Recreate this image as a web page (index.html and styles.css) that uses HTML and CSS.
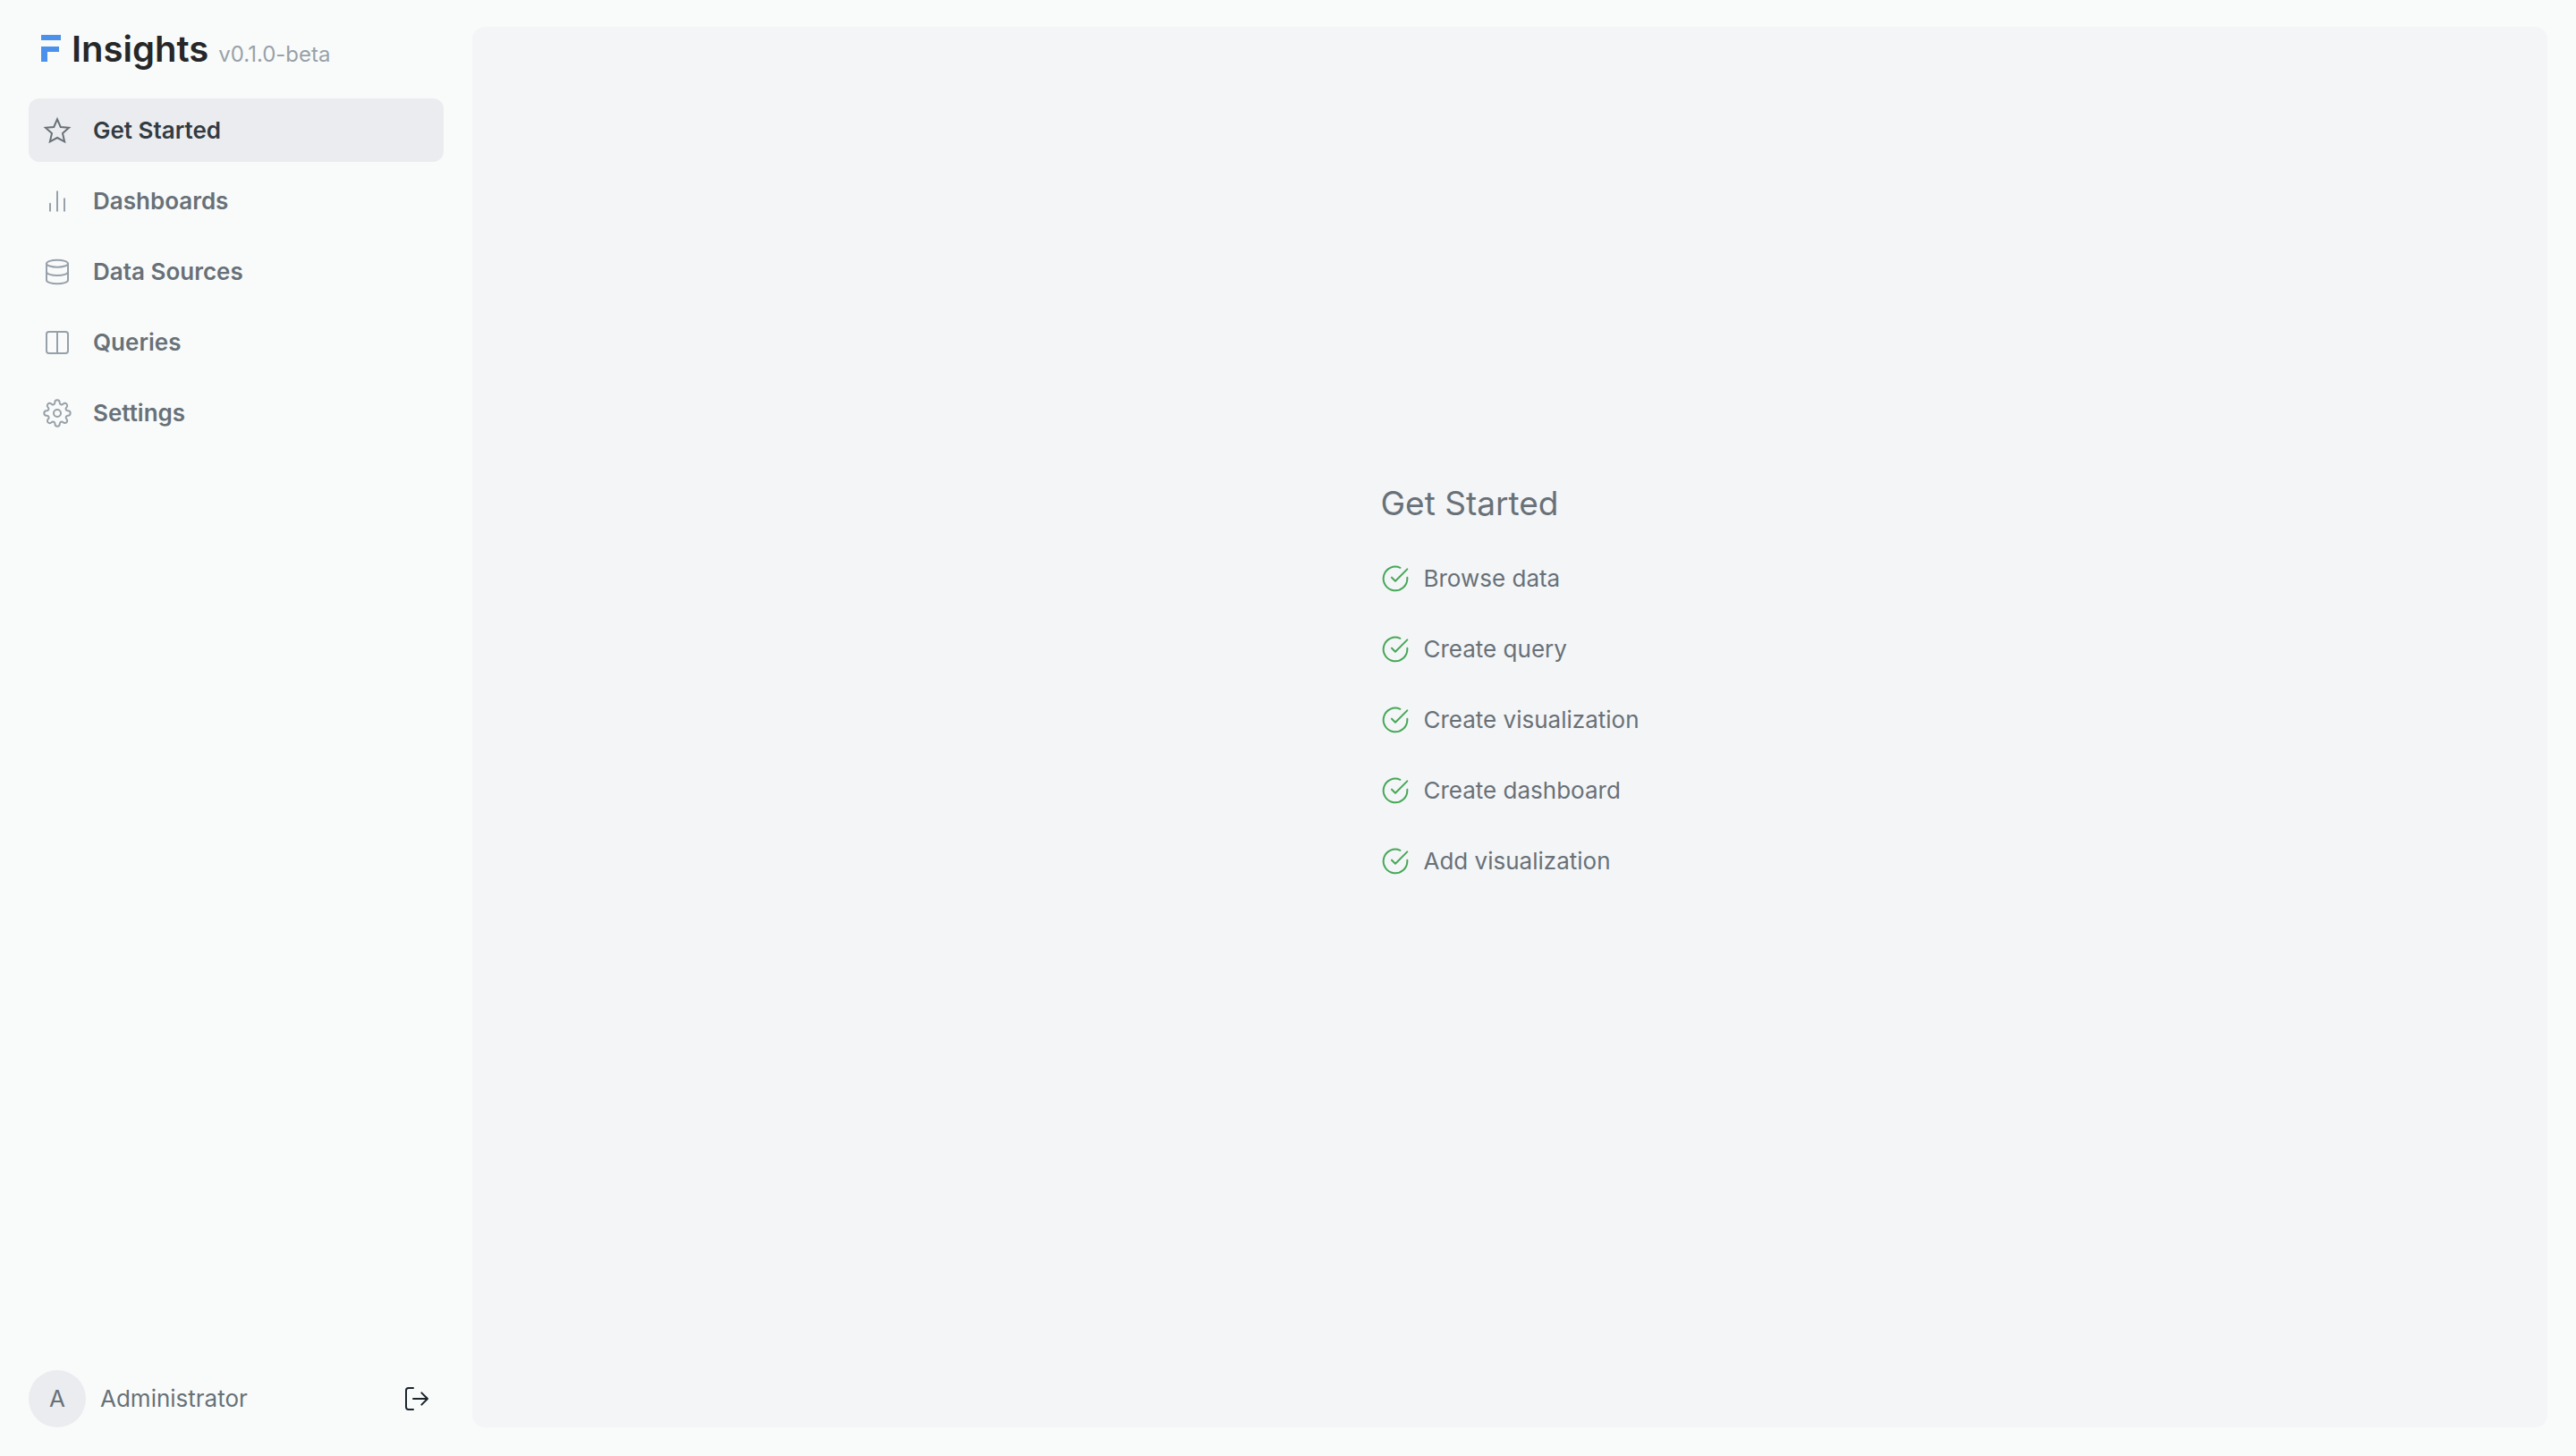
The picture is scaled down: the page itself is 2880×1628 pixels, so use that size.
FILE: index.html
```html
<!DOCTYPE html>
<html lang="en">
<head>
<meta charset="utf-8">
<meta name="viewport" content="width=device-width, initial-scale=1">
<title>Insights</title>
<link rel="stylesheet" href="styles.css">
</head>
<body>
<svg class="sprite" aria-hidden="true">
  <symbol id="check" viewBox="0 0 24 24"><path d="M22 11.08V12a10 10 0 1 1-5.93-9.14"/><path d="M22 4 12 14.01l-3-3"/></symbol>
</svg>
<div class="app">
  <aside class="sidebar">
    <header class="brand">
      <svg class="logo" viewBox="0 0 22 30" aria-hidden="true"><path d="M0 0h22v6H0zM0 13h20v6H7v11H0z"/></svg>
      <span class="name">Insights</span>
      <span class="version">v0.1.0-beta</span>
    </header>
    <nav class="nav">
      <a class="link active" href="#get-started" aria-current="page">
        <svg class="icon star" viewBox="0 0 24 24" aria-hidden="true"><path d="m12 2.500 2.800 6.500 7 .6-5.300 4.700 1.600 6.900-6.100-3.200-6.100 3.200 1.600-6.900L2.200 9.600l7-.6z"/></svg>
        Get Started
      </a>
      <a class="link" href="#dashboards">
        <svg class="icon" viewBox="0 0 24 24" aria-hidden="true"><path d="M18 20V10M12 20V4M6 20v-6"/></svg>
        Dashboards
      </a>
      <a class="link" href="#data-sources">
        <svg class="icon" viewBox="0 0 24 24" aria-hidden="true"><ellipse cx="12" cy="5" rx="9" ry="3"/><path d="M21 12c0 1.660-4 3-9 3s-9-1.340-9-3"/><path d="M3 5v14c0 1.660 4 3 9 3s9-1.340 9-3V5"/></svg>
        Data Sources
      </a>
      <a class="link" href="#queries">
        <svg class="icon" viewBox="0 0 24 24" aria-hidden="true"><rect x="3" y="3" width="18" height="18" rx="2"/><path d="M12 3v18"/></svg>
        Queries
      </a>
      <a class="link" href="#settings">
        <svg class="icon" viewBox="0 0 24 24" aria-hidden="true"><circle cx="12" cy="12" r="3"/><path d="M19.400 15a1.650 1.650 0 0 0 .33 1.820l.06.06a2 2 0 1 1-2.830 2.830l-.06-.06a1.650 1.650 0 0 0-2.800 1.170V21a2 2 0 0 1-4 0v-.09a1.650 1.650 0 0 0-2.900-1.180l-.06.06a2 2 0 1 1-2.830-2.830l.06-.06A1.650 1.650 0 0 0 3.090 14H3a2 2 0 0 1 0-4h.09a1.650 1.650 0 0 0 1.180-2.900l-.06-.06a2 2 0 1 1 2.830-2.830l.06.06A1.650 1.650 0 0 0 10 3.090V3a2 2 0 0 1 4 0v.09a1.650 1.650 0 0 0 2.900 1.180l.06-.06a2 2 0 1 1 2.830 2.830l-.06.06A1.650 1.650 0 0 0 20.910 10H21a2 2 0 0 1 0 4h-.09a1.650 1.650 0 0 0-1.510 1z"/></svg>
        Settings
      </a>
    </nav>
    <footer class="account">
      <span class="avatar">A</span>
      <span class="user">Administrator</span>
      <button class="logout" type="button" aria-label="Log out">
        <svg class="icon" viewBox="0 0 24 24" aria-hidden="true"><path d="M9 21H5a2 2 0 0 1-2-2V5a2 2 0 0 1 2-2h4M16 17l5-5-5-5M21 12H9"/></svg>
      </button>
    </footer>
  </aside>
  <main class="panel">
    <section class="onboarding">
      <h1 class="title">Get Started</h1>
      <ul class="steps">
        <li class="step"><svg class="icon" aria-hidden="true"><use href="#check"/></svg>Browse data</li>
        <li class="step"><svg class="icon" aria-hidden="true"><use href="#check"/></svg>Create query</li>
        <li class="step"><svg class="icon" aria-hidden="true"><use href="#check"/></svg>Create visualization</li>
        <li class="step"><svg class="icon" aria-hidden="true"><use href="#check"/></svg>Create dashboard</li>
        <li class="step"><svg class="icon" aria-hidden="true"><use href="#check"/></svg>Add visualization</li>
      </ul>
    </section>
  </main>
</div>
</body>
</html>
```
FILE: styles.css
```css
* { box-sizing: border-box; }
body {
  margin: 0;
  background: #f9fbfa;
  color: #687178;
  font-family: Inter, "Liberation Sans", sans-serif;
  font-size: 26px;
  line-height: 40px;
}
.sprite { display: none; }
.app {
  display: flex;
  min-height: 100vh;
  padding: 30px 32px 32px;
  gap: 32px;
}
.sidebar {
  flex: none;
  display: flex;
  flex-direction: column;
  width: 464px;
}
.brand {
  display: flex;
  align-items: baseline;
  padding: 0 14px;
  height: 80px;
}
.logo { width: 22px; height: 30px; fill: #4b91ec; }
.name {
  margin: 0 11px 0 12px;
  color: #262729;
  font-size: 40px;
  line-height: 50px;
  font-weight: 600;
}
.version { color: #98a1a9; font-size: 24px; }
.nav { display: flex; flex-direction: column; gap: 8px; }
.icon {
  flex: none;
  width: 32px;
  height: 32px;
  fill: none;
  stroke: currentColor;
  stroke-width: 1.5;
  stroke-linecap: round;
  stroke-linejoin: round;
}
.star { stroke-linejoin: miter; }
.link {
  display: flex;
  align-items: center;
  gap: 24px;
  height: 71px;
  padding: 0 16px;
  border-radius: 12px;
  color: #687178;
  font-weight: 600;
  text-decoration: none;
}
.link .icon { stroke: #98a1a9; }
.active { background: #ebecef; color: #323b43; }
.active .icon { stroke: #687178; }
.account {
  display: flex;
  align-items: center;
  gap: 16px;
  margin-top: auto;
}
.avatar {
  width: 64px;
  height: 64px;
  border-radius: 50%;
  background: #ebecef;
  line-height: 64px;
  text-align: center;
}
.logout {
  display: flex;
  margin-left: auto;
  padding: 0 14px;
  border: 0;
  background: none;
  color: #1c242c;
}
.panel {
  flex: 1;
  display: flex;
  justify-content: center;
  align-items: center;
  padding-bottom: 104px;
  border-radius: 14px;
  background: #f4f5f7;
}
.title {
  margin: 0 0 40px;
  font-size: 37px;
  line-height: 48px;
  font-weight: 400;
}
.steps {
  display: flex;
  flex-direction: column;
  gap: 39px;
  margin: 0;
  padding: 0;
  list-style: none;
}
.step { display: flex; align-items: center; gap: 16px; }
.step .icon { stroke: #46a758; }
```
